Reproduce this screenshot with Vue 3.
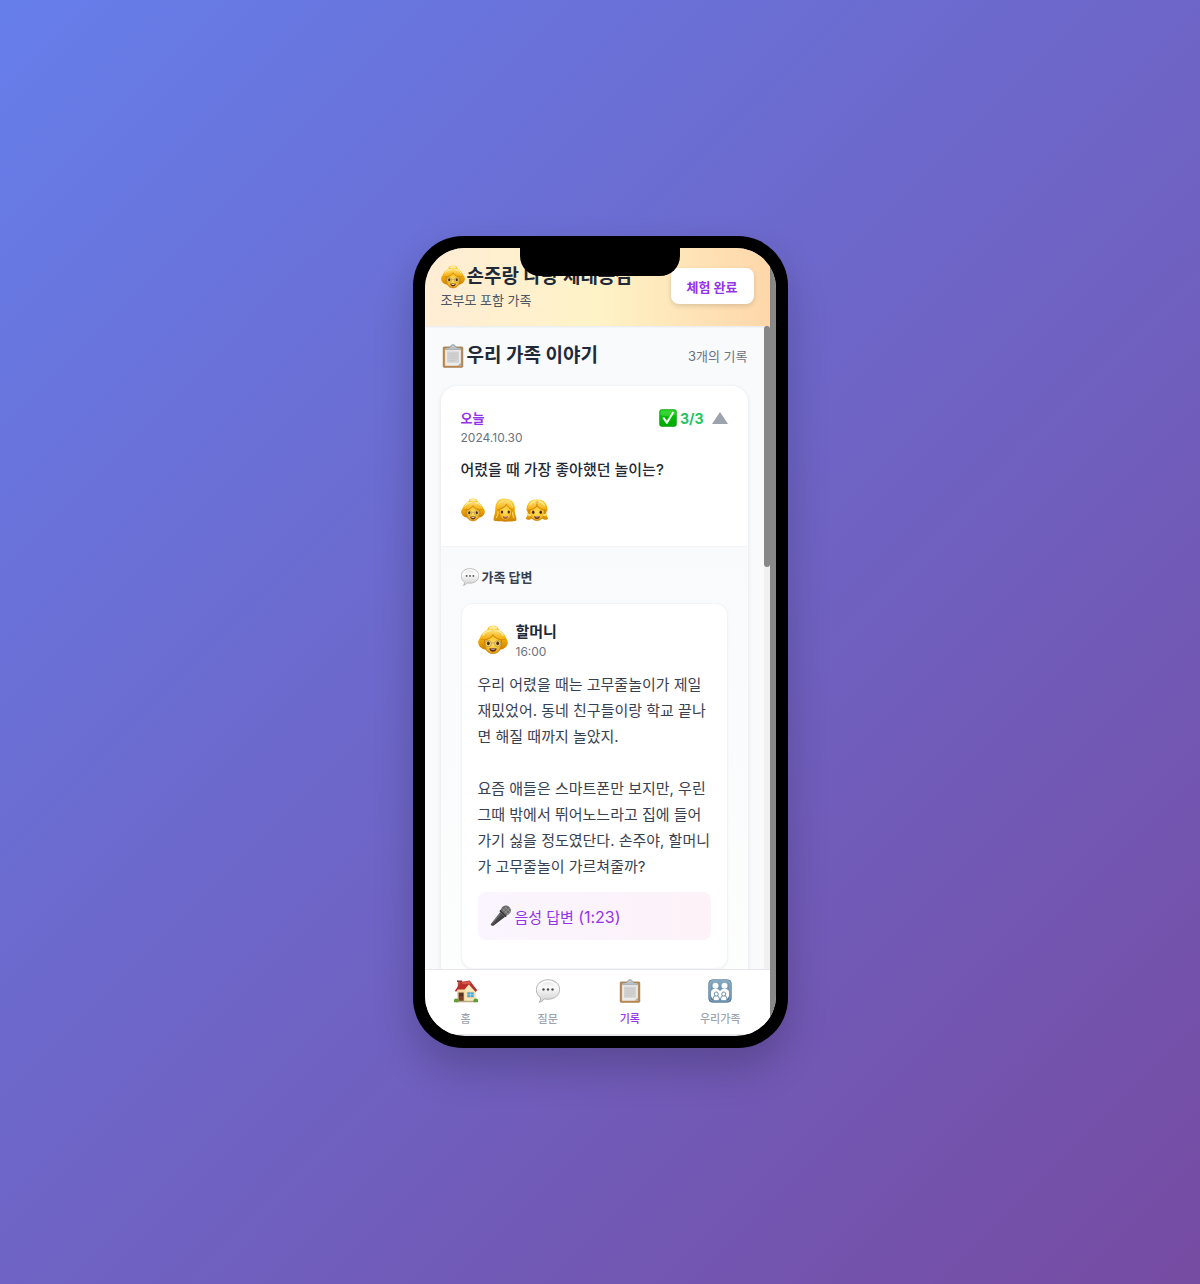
<script setup>
const people = ['grandma', 'woman', 'girl']
const tabs = [
  { icon: 'home', label: '홈' },
  { icon: 'bubble', label: '질문' },
  { icon: 'clipboard', label: '기록', active: true },
  { icon: 'family', label: '우리가족' },
]
const answer = '우리 어렸을 때는 고무줄놀이가 제일 재밌었어. 동네 친구들이랑 학교 끝나면 해질 때까지 놀았지.\n\n요즘 애들은 스마트폰만 보지만, 우린 그때 밖에서 뛰어노느라고 집에 들어가기 싫을 정도였단다. 손주야, 할머니가 고무줄놀이 가르쳐줄까?'
</script>

<template>
  <div class="page">
    <svg class="sprite" aria-hidden="true">
      <defs>
        <linearGradient id="hair" x1="0" y1="0" x2="0" y2="1">
          <stop offset="0" stop-color="#ffd44c" /><stop offset=".45" stop-color="#f7b003" /><stop offset="1" stop-color="#cf8200" />
        </linearGradient>
        <linearGradient id="fringe" x1="0" y1="0" x2="0" y2="1">
          <stop offset="0" stop-color="#ffe27a" /><stop offset="1" stop-color="#f3ab08" />
        </linearGradient>
        <radialGradient id="skin" cx=".5" cy=".45" r=".6">
          <stop offset="0" stop-color="#ffe05e" /><stop offset=".6" stop-color="#fcc42f" /><stop offset="1" stop-color="#d18708" />
        </radialGradient>
        <linearGradient id="silver" x1="0" y1="0" x2="0" y2="1">
          <stop offset="0" stop-color="#e2e2e2" /><stop offset=".35" stop-color="#fbfbfb" /><stop offset="1" stop-color="#cfcfcf" />
        </linearGradient>
        <linearGradient id="green" x1="0" y1="0" x2="0" y2="1">
          <stop offset="0" stop-color="#25d425" /><stop offset=".4" stop-color="#00bd06" /><stop offset="1" stop-color="#00a800" />
        </linearGradient>
        <linearGradient id="blue" x1="0" y1="0" x2="0" y2="1">
          <stop offset="0" stop-color="#86a9c4" /><stop offset="1" stop-color="#4f7899" />
        </linearGradient>
        <linearGradient id="mic" x1="0" y1="0" x2="1" y2="1">
          <stop offset="0" stop-color="#777" /><stop offset=".4" stop-color="#555" /><stop offset="1" stop-color="#111" />
        </linearGradient>
        <symbol id="grandma" viewBox="0 0 32 32">
          <ellipse cx="16" cy="5" rx="6" ry="4.500" fill="url(#hair)" />
          <path d="M11 3q5-4 10 0l-2 2h-6z" fill="#ffeaa0" />
          <path d="M16 4C9 4 4 8 2 14c-3 3-2 8 1 10 3 3 7 2 9 2h8c2 0 6 1 9-2 3-2 4-7 1-10C28 8 23 4 16 4z" fill="url(#hair)" />
          <path d="M7 16c4-1 8-3 9-5 1 2 5 4 9 5 1 9-3 14.500-9 14.500S6 25 7 16z" fill="url(#skin)" stroke="#c07c06" stroke-width=".8" />
          <path d="M3 15C4 8 9 4 16 5c7-1 12 3 13 10-5 2-11-1-13-5-2 4-8 7-13 5z" fill="url(#fringe)" />
          <path d="M16 10c-2 4-8 7-13 5M16 10c2 4 8 7 13 5" fill="none" stroke="#c98406" stroke-width=".8" />
          <path d="M5 11q3-5 9-5M18 6q6 0 9 5" fill="none" stroke="#fff0b0" stroke-width="1.300" />
          <g fill="#fbe48c" fill-opacity=".4" stroke="#b39a62" stroke-width=".9"><circle cx="11" cy="20" r="3.300" /><circle cx="21" cy="20" r="3.300" /><path d="M14.300 19.500q1.700-1 3.400 0" fill="none" /></g>
          <ellipse cx="11" cy="19.500" rx="1.500" ry="2" fill="#4c2a0a" /><ellipse cx="21" cy="19.500" rx="1.500" ry="2" fill="#4c2a0a" />
          <path d="M12 25q4-1 8 0-1 3.500-4 3.500T12 25z" fill="#5e2c14" /><path d="M13.500 25.200h5l-1 1h-3z" fill="#fff" />
        </symbol>
        <symbol id="woman" viewBox="0 0 32 32">
          <path d="M17 1C8-1 3 6 3 15c0 8-3 10-2 15 3 2 27 2 30 0 1-5-2-7-2-14C30 7 25 1 17 1z" fill="url(#hair)" />
          <path d="M8 15c5-1 9-4 11-7 1 4 3 6 6 7 1 9-3 15-8.500 15S7 24 8 15z" fill="url(#skin)" stroke="#c07c06" stroke-width=".8" />
          <path d="M5 16C4 8 9 2 17 2c3 4-4 12-12 14zM17 2c7 0 11 6 11 14-6-1-9-5-10-8z" fill="url(#fringe)" />
          <path d="M5 16c6-1 12-5 13-8 1 3 4 7 10 8" fill="none" stroke="#c98406" stroke-width=".9" />
          <path d="M7 9q3-5 8-6M21 5q4 3 5 7M4 27q3-4 3-9M28 27q-2-3-2-8" fill="none" stroke="#ffe68c" stroke-width="1.200" />
          <ellipse cx="12" cy="18.500" rx="1.600" ry="2" fill="#4c2a0a" /><ellipse cx="21" cy="18.500" rx="1.600" ry="2" fill="#4c2a0a" />
          <path d="M13 24.500q3.500-1 7 0-1 3-3.500 3T13 24.500z" fill="#953a1c" /><path d="M14 24.700h5l-1 1h-3z" fill="#fff" />
        </symbol>
        <symbol id="girl" viewBox="0 0 32 32">
          <path d="M5 17c-3 4-1 7-4 10 2 3 8 3 9-2zM27 17c3 4 1 7 4 10-2 3-8 3-9-2z" fill="url(#hair)" />
          <path d="M16 2C7 1 2 8 2 16l3 5h22l3-5C30 8 25 1 16 2z" fill="url(#hair)" />
          <path d="M6 16c5-1 9-3 10-6 1 3 5 5 10 6 1 9-4 14-10 14S5 25 6 16z" fill="url(#skin)" stroke="#c07c06" stroke-width=".8" />
          <path d="M3 16C3 8 9 2 16 3c7-1 13 5 13 13-7 0-12-3-13-8-1 5-6 8-13 8z" fill="url(#fringe)" />
          <path d="M16 4v4c-1 5-6 8-13 8M16 8c1 5 6 8 13 8" fill="none" stroke="#c98406" stroke-width=".8" />
          <path d="M6 10q3-5 8-6M18 4q5 1 8 6" fill="none" stroke="#ffec97" stroke-width="1.400" />
          <path d="M3 22l5 1M29 22l-5 1" stroke="#ffe167" stroke-width="2.500" />
          <ellipse cx="11" cy="19" rx="1.700" ry="2.200" fill="#4c2a0a" /><ellipse cx="21" cy="19" rx="1.700" ry="2.200" fill="#4c2a0a" />
          <path d="M12 24.500q4-1 8 0-1 3.500-4 3.500t-4-3.500z" fill="#5e2c14" /><path d="M13.500 24.700h5l-1 1h-3z" fill="#fff" />
        </symbol>
        <symbol id="clipboard" viewBox="0 0 32 32">
          <rect x="3" y="4" width="26" height="27" rx="1" fill="#c18d4f" stroke="#9a6d3a" />
          <path d="M5.500 6h21v23h-21z" fill="#ececec" /><path d="M8 10h16v15H8z" fill="#d2d2d2" />
          <path d="M10 13h12M10 16h12M10 19h12M10 22h9" stroke="#c4c4c4" stroke-width="1" />
          <path d="M22 29l4.500-4v4z" fill="#aaa" />
          <path d="M6 7.500V5.500q5 0 7-2c0-4 6-4 6 0q2 2 7 2v2z" fill="#bcc3c7" stroke="#8b9296" stroke-width=".7" />
          <circle cx="16" cy="3" r="1.400" fill="#fff" stroke="#9da4a8" />
        </symbol>
        <symbol id="check" viewBox="0 0 32 32">
          <rect x="1" y="1" width="30" height="30" rx="4" fill="url(#green)" stroke="#079b08" />
          <path d="M3 6q1-3 4-3h18q3 0 4 3v4Q16 14 3 11z" fill="#55dd4f" opacity=".55" />
          <path d="M6 16l3-2 5 7L24 5l3 1-12 20h-2z" fill="#fff" />
        </symbol>
        <symbol id="bubble" viewBox="0 0 32 32">
          <path d="M16 1c9.500 0 15.500 5.500 15.500 13S25 27 16 27c-2 0-3 0-5-.5C9 29 7 30.500 4 31c2-2 2.500-4 2-6C2.500 22.500.5 19 .5 14 .5 6.500 7 1 16 1z" fill="url(#silver)" stroke="#a2a2a2" />
          <path d="M4 10q4-7 12-7t12 7" stroke="#fff" stroke-width="2" fill="none" />
          <g fill="#4c4c4c"><circle cx="10" cy="14" r="1.600" /><circle cx="16" cy="14" r="1.600" /><circle cx="22" cy="14" r="1.600" /></g>
        </symbol>
        <symbol id="microphone" viewBox="0 0 32 32">
          <path d="M15 10l7 7L5 30q-3 1-4-2z" fill="url(#mic)" />
          <path d="M3 27l12-14" stroke="#888" />
          <path d="M16 6c2-5 8-7 12-3s3 9-3 12l-3 2-8-8z" fill="#6a6a6a" />
          <path d="M18 5l9 9M22 3l8 8M17 10l8-8M20 13l9-9M23 16l7-7" stroke="#aaa" stroke-width=".8" />
          <path d="M14.500 8l9 9" stroke="#333" stroke-width="2" />
        </symbol>
        <symbol id="home" viewBox="0 0 32 32">
          <path d="M5 3h5v9H5z" fill="#b85b48" /><path d="M4 2h7v2H4z" fill="#8e3029" />
          <path d="M4 15L10 7h11l8 9v14H4z" fill="#f1d9a2" />
          <path d="M15 14l6-8 8 10v14H15z" fill="#fae8bd" />
          <path d="M1 16L9 4l12-2 10 13-2 2-9-10-6 7H5l-2 3z" fill="#b92f2c" /><path d="M9 5l12-2 2 3-10 1z" fill="#d8574c" />
          <path d="M20 7l9 10" stroke="#8b2624" stroke-width=".8" />
          <path d="M6 18h7v12H6z" fill="#7b4229" /><path d="M7 19h2v4H7zM10 19h2v4h-2z" fill="#4b3027" />
          <path d="M17 17h10v8H17z" fill="#d9c08b" /><path d="M18 18h8v6h-8z" fill="#45a7da" /><path d="M22 18v6M18 21h8" stroke="#a9d7ea" />
          <path d="M3 29h26v2H3z" fill="#b7a783" /><path d="M0 31q-1-5 3-5t3 5zM26 31q-1-5 3-5t3 5z" fill="#5da037" />
        </symbol>
        <symbol id="family" viewBox="0 0 32 32">
          <rect x="1" y="1" width="30" height="30" rx="5" fill="url(#blue)" stroke="#517590" />
          <rect x="2.500" y="2.500" width="27" height="27" rx="4" fill="none" stroke="#9bb6ca" />
          <g fill="#fff"><circle cx="10" cy="9" r="4" /><circle cx="22" cy="9" r="4" /><path d="M4 23v-5q0-5 6-5 4 0 6 3 2-3 6-3 6 0 6 5v5l-2 3H6z" /></g>
          <g fill="#fff" stroke="#5f87a6" stroke-width="1.200"><path d="M7 29v-3q0-4 4-4t4 4v3zM17 29v-3q0-4 4-4t4 4v3z" /><circle cx="11" cy="20" r="2.700" /><circle cx="21" cy="20" r="2.700" /></g>
        </symbol>
      </defs>
    </svg>

    <div class="phone">
      <div class="notch"></div>
      <div class="screen">
        <div class="app">
          <header class="top">
            <div>
              <h1 class="title"><svg class="i24"><use href="#grandma" /></svg>손주랑 나랑 세대공감</h1>
              <p class="subtitle">조부모 포함 가족</p>
            </div>
            <button class="done" type="button">체험 완료</button>
          </header>
          <div class="body">
            <main class="content">
              <div class="heading">
                <h2 class="title"><svg class="i24"><use href="#clipboard" /></svg>우리 가족 이야기</h2>
                <span class="count">3개의 기록</span>
              </div>
              <article class="record">
                <div class="summary">
                  <div class="meta">
                    <div>
                      <p class="day">오늘</p>
                      <p class="date">2024.10.30</p>
                    </div>
                    <div class="state">
                      <svg class="i18"><use href="#check" /></svg><span class="score">3/3</span>
                      <svg class="caret" viewBox="0 0 16 14"><path d="M8 1l8 12H0z" fill="#9ca3af" /></svg>
                    </div>
                  </div>
                  <h3 class="question">어렸을 때 가장 좋아했던 놀이는?</h3>
                  <div class="people">
                    <svg v-for="p in people" :key="p" class="i24"><use :href="'#' + p" /></svg>
                  </div>
                </div>
                <div class="details">
                  <h4 class="label"><svg class="i18"><use href="#bubble" /></svg>가족 답변</h4>
                  <section class="reply">
                    <div class="author">
                      <svg class="i30"><use href="#grandma" /></svg>
                      <div>
                        <p class="name">할머니</p>
                        <p class="date">16:00</p>
                      </div>
                    </div>
                    <p class="answer">{{ answer }}</p>
                    <button class="voice" type="button"><svg class="i22"><use href="#microphone" /></svg><span>음성 답변 <span class="duration">(1:23)</span></span></button>
                  </section>
                </div>
              </article>
            </main>
            <div class="track"><div class="thumb"></div></div>
          </div>
          <nav class="tabs">
            <button v-for="t in tabs" :key="t.icon" class="tab" :class="{ active: t.active }" type="button">
              <svg class="i24"><use :href="'#' + t.icon" /></svg>
              <span>{{ t.label }}</span>
            </button>
          </nav>
        </div>
        <div class="rail"></div>
      </div>
    </div>
  </div>
</template>

<style>
body { margin: 0; }
</style>

<style scoped>
* { box-sizing: border-box; }
.page {
  min-height: 100vh;
  display: flex;
  align-items: center;
  justify-content: center;
  background: linear-gradient(135deg, #667eea 0%, #764ba2 100%);
  font-family: Inter, "Noto Sans CJK KR", sans-serif;
  color: #1f2937;
}
h1, h2, h3, h4, p { margin: 0; }
button { font-family: inherit; border: 0; cursor: pointer; }
svg { flex: none; display: block; }
.sprite { position: absolute; width: 0; height: 0; }
.i18 { width: 18px; height: 18px; }
.i22 { width: 22px; height: 22px; }
.i24 { width: 24px; height: 24px; }
.i30 { width: 30px; height: 30px; }
.phone {
  position: relative;
  width: 375px;
  max-width: 100%;
  height: 812px;
  padding: 12px;
  border-radius: 50px;
  background: #000;
  box-shadow: 0 20px 40px rgba(0, 0, 0, .2);
}
.notch {
  position: absolute;
  z-index: 2;
  top: 12px;
  left: 50%;
  width: 160px;
  height: 28px;
  margin-left: -80px;
  background: #000;
  border-radius: 0 0 20px 20px;
}
.screen {
  display: flex;
  height: 100%;
  overflow: hidden;
  border-radius: 40px;
  background: #e5e7eb;
}
.app { flex: 1; min-width: 0; display: flex; flex-direction: column; padding-bottom: 2px; }
.rail { width: 6px; background: #888; }
.top {
  display: flex;
  align-items: center;
  justify-content: space-between;
  height: 78px;
  padding: 0 16px 2px;
  background: linear-gradient(90deg, #ffedd5, #fef3c7 50%, #fed7aa);
  box-shadow: 0 1px 2px rgba(0, 0, 0, .08);
  position: relative;
}
.title { display: flex; align-items: center; gap: 2px; height: 28px; font-size: 19px; line-height: 28px; font-weight: 700; white-space: nowrap; }
.subtitle { font-size: 13px; line-height: 18px; color: #4b5563; }
.done {
  height: 36px;
  padding: 0 16px;
  border-radius: 8px;
  background: #fff;
  color: #9333ea;
  font-size: 13px;
  font-weight: 700;
  box-shadow: 0 2px 5px rgba(0, 0, 0, .14);
  white-space: nowrap;
}
.body { flex: 1; min-height: 0; display: flex; overflow: hidden; background: #f8fafc; }
.content { flex: 1; min-width: 0; padding: 16px; }
.track { width: 6px; background: #f1f1f1; }
.thumb { height: 241px; border-radius: 3px; background: #888; }
.heading { display: flex; align-items: center; justify-content: space-between; margin-bottom: 16px; }
.count { font-size: 13px; line-height: 20px; color: #6b7280; }
.record { border-radius: 16px; background: #fff; box-shadow: 0 1px 4px rgba(0, 0, 0, .1); overflow: hidden; }
.summary { padding: 20px; }
.meta { display: flex; justify-content: space-between; align-items: flex-start; margin-bottom: 12px; }
.day { font-size: 13px; line-height: 24px; font-weight: 700; color: #9333ea; }
.date { font-size: 12px; line-height: 16px; color: #6b7280; }
.state { display: flex; align-items: center; height: 24px; }
.score { margin: 0 8px 0 3px; font-size: 14px; font-weight: 700; color: #22c55e; }
.caret { width: 16px; height: 14px; }
.question { margin-bottom: 12px; font-size: 15px; line-height: 24px; font-weight: 500; }
.people { display: flex; gap: 8px; height: 32px; align-items: center; }
.details { padding: 20px; border-top: 1px solid #f1f3f5; background: linear-gradient(#f8fafc, #fdfefd 480px); }
.label { display: flex; align-items: center; gap: 3px; margin-bottom: 16px; font-size: 13px; line-height: 20px; font-weight: 700; color: #374151; }
.reply { padding: 16px; border: 1px solid #f3f4f6; border-radius: 12px; background: #fff; box-shadow: 0 1px 2px rgba(0, 0, 0, .05); }
.author { display: flex; align-items: center; gap: 8px; margin-bottom: 12px; }
.name { font-size: 15px; line-height: 24px; font-weight: 700; }
.answer { margin-bottom: 12px; font-size: 15px; line-height: 26px; color: #374151; white-space: pre-line; }
.voice {
  display: flex;
  align-items: center;
  gap: 3px;
  width: 100%;
  height: 48px;
  margin-bottom: 12px;
  padding: 0 12px;
  border-radius: 8px;
  background: linear-gradient(90deg, #faf5ff, #fdf2f8);
  color: #9333ea;
  font-size: 15px;
}
.duration { font-size: 16px; }
.tabs {
  display: flex;
  justify-content: space-around;
  height: 65px;
  border-top: 1px solid #e5e7eb;
  background: #fff;
}
.tab {
  display: flex;
  flex-direction: column;
  align-items: center;
  justify-content: center;
  gap: 8px;
  padding: 4px 12px 2px;
  background: none;
  color: #9ca3af;
  font-size: 11px;
  line-height: 16px;
  font-weight: 500;
}
.tab.active { color: #9333ea; }
</style>
